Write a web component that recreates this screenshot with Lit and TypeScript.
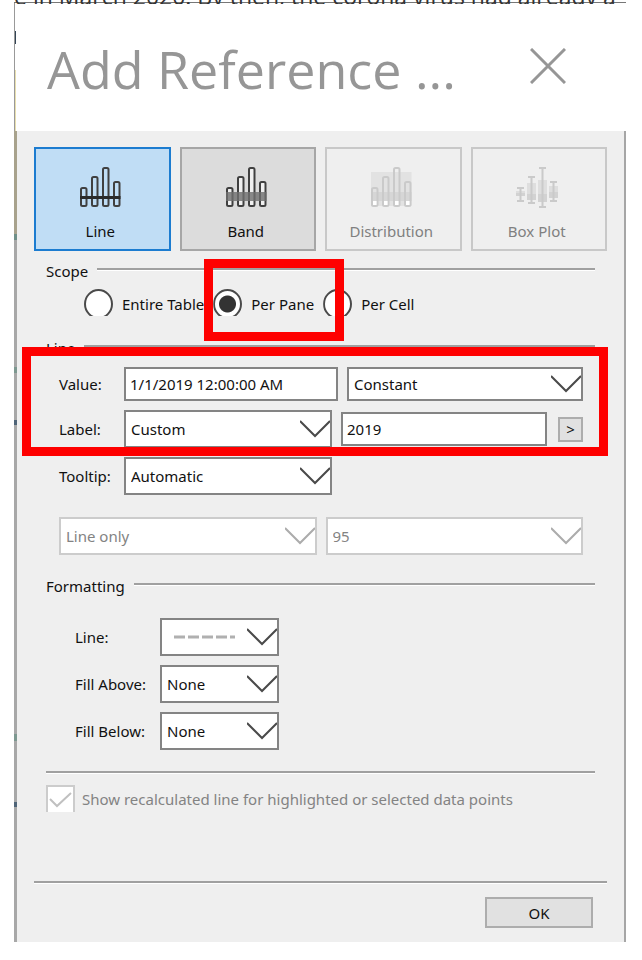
import { LitElement, html, css, svg, nothing } from "lit";
import { customElement, property } from "lit/decorators.js";

const BARS = [
  { x: 1, y: 21 },
  { x: 12, y: 10 },
  { x: 23, y: 1 },
  { x: 34, y: 15 },
];

const bars = (fill: string) =>
  BARS.map(
    (b) => svg`<rect x=${b.x} y=${b.y} width="5.500" height=${39 - b.y} rx="1.500" fill=${fill} stroke="currentColor" stroke-width="2"/>`
  );

const lineIcon = svg`${bars("none")}<path d="M0 30.500H40.500" stroke="#2b2b2b" stroke-width="3"/>`;

const bandIcon = svg`${bars("#f0f0f0")}<rect x="0" y="25" width="40.500" height="9" fill="#6e6e6e" opacity=".8"/>`;

const distributionIcon = svg`<rect x="0" y="5" width="40.500" height="34" fill="#e2e2e2"/>
  <rect x="0" y="25" width="40.500" height="9" fill="#d6d6d6"/>${bars("none")}
  ${BARS.map((b) => svg`<rect x=${b.x + 1} y="34" width="3.500" height="4" fill="#fff"/>`)}`;

const boxPlotIcon = svg`
  <g fill="#dedede"><rect x="-1" y="24" width="9" height="5"/><rect x="10" y="16" width="9" height="17"/>
  <rect x="21" y="13" width="9" height="22"/><rect x="32" y="19" width="9" height="12"/></g>
  <g fill="#d2d2d2"><rect x="-1" y="26" width="9" height="3"/><rect x="10" y="27" width="9" height="6"/>
  <rect x="21" y="27" width="9" height="8"/><rect x="32" y="25" width="9" height="6"/></g>
  <path fill="none" stroke="currentColor" stroke-width="2" d="M0 21h7M0 34h7M3.500 21v13M11 10h7M11 36h7M14.500 10v26M22 1h7M22 40h7M25.500 1v39M33 15h7M33 34h7M36.500 15v19"/>`;

@customElement("drop-down")
class DropDown extends LitElement {
  @property() value = "";
  @property() name = "";
  @property({ type: Boolean }) disabled = false;
  @property({ type: Boolean }) dashed = false;

  static styles = css`
    :host {
      display: grid;
      min-width: 0;
      height: 38px;
    }
    .select,
    .dash,
    .chevron {
      grid-area: 1 / 1;
    }
    .select {
      appearance: none;
      box-sizing: border-box;
      width: 100%;
      height: 100%;
      margin: 0;
      padding: 0 32px 0 5px;
      border: 2px solid #848484;
      border-radius: 0;
      background: #fff;
      color: #111;
      font: inherit;
      opacity: 1;
    }
    .select:disabled {
      border-color: #ccc;
      color: #838383;
    }
    .chevron,
    .dash {
      align-self: center;
      pointer-events: none;
      fill: none;
    }
    .chevron {
      justify-self: end;
      margin-right: 2px;
      stroke: #4a4a4a;
      stroke-width: 2;
    }
    .off {
      stroke: #acacac;
    }
    .dash {
      margin-left: 14px;
      stroke: #b0b0b0;
      stroke-width: 3;
      stroke-dasharray: 11 3;
    }
  `;

  render() {
    return html`
      <select class="select" aria-label=${this.name} ?disabled=${this.disabled}>
        <option>${this.value}</option>
      </select>
      ${this.dashed
        ? html`<svg class="dash" width="62" height="4"><path d="M0 2H61" /></svg>`
        : nothing}
      <svg class="chevron ${this.disabled ? "off" : ""}" width="30" height="18" viewBox="0 0 30 18">
        <path d="M0 1L15 16L30 1" />
      </svg>
    `;
  }
}

@customElement("app-root")
class AppRoot extends LitElement {
  static styles = css`
    :host {
      display: block;
      min-height: 960px;
      background: #fff;
      color: #111;
      font: 15px/20px "Noto Sans", "Open Sans", sans-serif;
    }
    .page {
      position: relative;
      padding: 2px 16px 18px 14px;
    }
    .behind {
      position: absolute;
      inset: 0 16px auto 14px;
      height: 4px;
      overflow: hidden;
    }
    .behind-text {
      margin: -14px 0 0;
      font-family: "Open Sans", "Noto Sans", sans-serif;
      font-size: 23px;
      line-height: 20px;
      white-space: nowrap;
      color: #333;
    }
    .dialog {
      position: relative;
      border-top: 1px solid #777;
    }
    .title-bar {
      display: flex;
      align-items: center;
      justify-content: space-between;
      box-sizing: border-box;
      height: 128px;
      padding: 4px 60px 0 32px;
      border-left: 1px solid #999;
      background: linear-gradient(transparent 28px, #345 28px 41px, transparent 41px 67px, #e8dfae 67px) left / 1px
        100% no-repeat #fff;
    }
    .title {
      margin: 0;
      font-family: "Open Sans", "Noto Sans", sans-serif;
      font-size: 52px;
      line-height: 72px;
      font-weight: 400;
      color: #969696;
      white-space: nowrap;
    }
    .close {
      width: 36px;
      height: 36px;
      margin-bottom: 6px;
      padding: 0;
      border: 0;
      background: none;
    }
    .close-icon {
      display: block;
      fill: none;
      stroke: #969696;
      stroke-width: 3;
    }
    .body {
      padding: 16px 17px 14px 20px;
      border-right: 2px solid #a6a6a6;
      background: linear-gradient(
          #a8a28c 103px,
          #6f8f88 103px 109px,
          #a8a8a8 109px 236px,
          #7d9890 236px 242px,
          #a8a8a8 242px 289px,
          #4f6478 289px 294px,
          #a8a8a8 294px 603px,
          #7d9890 603px 610px,
          #a8a8a8 610px 671px,
          #4f6478 671px 676px,
          #a8a8a8 676px
        )
        left / 3px 100% no-repeat #efefef;
    }
    .tiles {
      display: grid;
      grid-template-columns: repeat(4, 1fr);
      gap: 9px;
    }
    .tile {
      display: flex;
      flex-direction: column;
      align-items: center;
      gap: 13px;
      height: 104px;
      padding: 17px 4px 0 0;
      border: 2px solid #a6a6a6;
      background: #dcdcdc;
      color: #404040;
      font: inherit;
    }
    .tile.selected {
      border-color: #1c7cd0;
      background: #c0ddf5;
    }
    .tile:disabled {
      border-color: #c8c8c8;
      background: #efefef;
      color: #cacaca;
    }
    .tile-name {
      color: #111;
    }
    .tile:disabled .tile-name {
      color: #808080;
    }
    .section {
      position: relative;
      margin: 0 12px;
    }
    .heading {
      display: flex;
      gap: 9px;
      margin: 0;
      font-size: 15px;
      line-height: 20px;
      font-weight: 400;
    }
    .heading::after,
    .rule {
      content: "";
      flex: 1;
      height: 2px;
      border-bottom: 1px solid #fff;
      background: #a0a0a0;
    }
    .heading::after {
      margin-top: 7px;
    }
    .scope {
      margin-top: 10px;
      height: 77px;
    }
    .radios {
      display: flex;
      gap: 9px;
      padding: 8px 0 0 38px;
    }
    .choice {
      display: flex;
      align-items: center;
      gap: 9px;
      white-space: nowrap;
    }
    .radio {
      appearance: none;
      box-sizing: border-box;
      width: 29px;
      height: 30px;
      margin: 0;
      border: 2px solid #4a4a4a;
      border-radius: 50%;
      background: #fff;
      clip-path: inset(0 0 3px);
    }
    .radio:checked {
      background: radial-gradient(circle, #333 8px, #fff 9px);
    }
    .mark {
      position: absolute;
      border: 9px solid #fe0000;
      pointer-events: none;
    }
    .mark-scope {
      inset: -2px auto auto 158px;
      width: 122px;
      height: 64px;
    }
    .mark-line {
      inset: 9px -13px auto -24px;
      height: 91px;
    }
    .rows {
      display: grid;
      gap: 9px;
      padding: 9px 12px 0 13px;
    }
    .row {
      display: grid;
      align-items: center;
      column-gap: 9px;
    }
    .value-row {
      grid-template-columns: 56px 214fr 236fr;
    }
    .label-row {
      grid-template-columns: 56px 207fr 205fr 27px;
    }
    .pair {
      grid-template-columns: 1fr 1fr;
      padding-top: 13px;
    }
    .short {
      height: 34px;
    }
    .text {
      box-sizing: border-box;
      width: 100%;
      min-width: 0;
      height: 34px;
      padding: 0 4px;
      border: 2px solid #848484;
      background: #fff;
      color: #111;
      font: inherit;
    }
    .more,
    .ok {
      box-sizing: border-box;
      padding: 0;
      border: 2px solid #adadad;
      background: #e1e1e1;
      color: #111;
      font: inherit;
    }
    .more {
      justify-self: end;
      width: 25px;
      height: 25px;
    }
    .formatting {
      margin-top: 21px;
    }
    .format-rows {
      display: grid;
      grid-template-columns: 76px 119px;
      gap: 9px;
      align-items: center;
      padding: 22px 0 21px 29px;
      white-space: nowrap;
    }
    .recalc {
      display: flex;
      align-items: center;
      gap: 7px;
      height: 27px;
      margin-top: 11px;
      color: #838383;
    }
    .check {
      display: grid;
      width: 29px;
      height: 27px;
    }
    .box,
    .tick {
      grid-area: 1 / 1;
    }
    .box {
      appearance: none;
      box-sizing: border-box;
      width: 29px;
      height: 27px;
      margin: 0;
      border: 2px solid #ccc;
      border-bottom: 0;
      background: #fff;
    }
    .tick {
      position: relative;
      fill: none;
      stroke: #c0c0c0;
      stroke-width: 2;
      pointer-events: none;
    }
    .footer {
      margin-top: 69px;
    }
    .actions {
      display: flex;
      justify-content: flex-end;
      padding: 13px 14px 0 0;
    }
    .ok {
      width: 108px;
      height: 31px;
    }
  `;

  private tile(name: string, icon: unknown, selected = false, disabled = false) {
    return html`<button class="tile ${selected ? "selected" : ""}" ?disabled=${disabled}>
      <svg width="42" height="42" viewBox="-1 -1 42 42">${icon}</svg>
      <span class="tile-name">${name}</span>
    </button>`;
  }

  private radio(name: string, checked = false) {
    return html`<label class="choice">
      <input class="radio" type="radio" name="scope" .checked=${checked} />${name}
    </label>`;
  }

  render() {
    return html`
      <div class="page">
        <main class="dialog">
          <header class="title-bar">
            <h1 class="title">Add Reference ...</h1>
            <button class="close" aria-label="Close">
              <svg class="close-icon" width="36" height="36" viewBox="0 0 36 36"><path d="M1 1L35 35M35 1L1 35" /></svg>
            </button>
          </header>
          <div class="body">
            <div class="tiles">
              ${this.tile("Line", lineIcon, true)} ${this.tile("Band", bandIcon)}
              ${this.tile("Distribution", distributionIcon, false, true)}
              ${this.tile("Box Plot", boxPlotIcon, false, true)}
            </div>

            <section class="section scope">
              <h2 class="heading">Scope</h2>
              <div class="radios">
                ${this.radio("Entire Table")} ${this.radio("Per Pane", true)} ${this.radio("Per Cell")}
              </div>
              <div class="mark mark-scope"></div>
            </section>

            <section class="section">
              <h2 class="heading">Line</h2>
              <div class="rows">
                <div class="row value-row">
                  <label for="value">Value:</label>
                  <input id="value" class="text" value="1/1/2019 12:00:00 AM" />
                  <drop-down class="short" name="Value type" value="Constant"></drop-down>
                </div>
                <div class="row label-row">
                  <span>Label:</span>
                  <drop-down name="Label" value="Custom"></drop-down>
                  <input class="text" aria-label="Label text" value="2019" />
                  <button class="more" aria-label="Insert">&gt;</button>
                </div>
                <div class="row label-row">
                  <span>Tooltip:</span>
                  <drop-down name="Tooltip" value="Automatic"></drop-down>
                </div>
                <div class="row pair">
                  <drop-down name="Line display" value="Line only" disabled></drop-down>
                  <drop-down name="Confidence" value="95" disabled></drop-down>
                </div>
              </div>
              <div class="mark mark-line"></div>
            </section>

            <section class="section formatting">
              <h2 class="heading">Formatting</h2>
              <div class="format-rows">
                <span>Line:</span>
                <drop-down name="Line" dashed></drop-down>
                <span>Fill Above:</span>
                <drop-down name="Fill Above" value="None"></drop-down>
                <span>Fill Below:</span>
                <drop-down name="Fill Below" value="None"></drop-down>
              </div>
              <div class="rule"></div>
              <label class="recalc">
                <span class="check">
                  <input class="box" type="checkbox" checked disabled />
                  <svg class="tick" width="29" height="27" viewBox="0 0 29 27"><path d="M4 14L11 21L25 8" /></svg>
                </span>
                Show recalculated line for highlighted or selected data points
              </label>
            </section>

            <footer class="footer">
              <div class="rule"></div>
              <div class="actions"><button class="ok">OK</button></div>
            </footer>
          </div>
        </main>
        <div class="behind" aria-hidden="true">
          <p class="behind-text">e in March 2020. By then, the corona virus had already a</p>
        </div>
      </div>
    `;
  }
}
